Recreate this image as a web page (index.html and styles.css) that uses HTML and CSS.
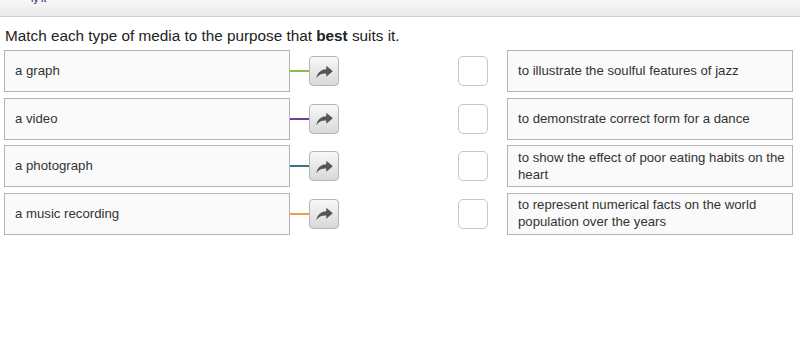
FILE: index.html
```html
<!DOCTYPE html>
<html lang="en">
<head>
    <meta charset="UTF-8">
    <title>Match the media</title>
    <link rel="stylesheet" href="styles.css">
</head>
<body>
    <div class="topbar"><span class="crumb">ly it</span></div>

    <main class="question">
        <p class="prompt">Match each type of media to the purpose that <b>best</b> suits it.</p>

        <div class="rows">
            <div class="row">
                <div class="item">a graph</div>
                <span class="link green"></span>
                <button class="move"><svg viewBox="0 0 16 16"><path d="M9.5 3.2 L15 7.8 L9.5 12.4 V9.8 C5.6 9.6 3.4 10.8 1.2 13.4 C2 9.4 4.4 6.6 9.5 6.2 Z"/></svg></button>
                <span class="check"></span>
                <div class="target">to illustrate the soulful features of jazz</div>
            </div>
            <div class="row">
                <div class="item">a video</div>
                <span class="link purple"></span>
                <button class="move"><svg viewBox="0 0 16 16"><path d="M9.5 3.2 L15 7.8 L9.5 12.4 V9.8 C5.6 9.6 3.4 10.8 1.2 13.4 C2 9.4 4.4 6.6 9.5 6.2 Z"/></svg></button>
                <span class="check"></span>
                <div class="target">to demonstrate correct form for a dance</div>
            </div>
            <div class="row">
                <div class="item">a photograph</div>
                <span class="link teal"></span>
                <button class="move"><svg viewBox="0 0 16 16"><path d="M9.5 3.2 L15 7.8 L9.5 12.4 V9.8 C5.6 9.6 3.4 10.8 1.2 13.4 C2 9.4 4.4 6.6 9.5 6.2 Z"/></svg></button>
                <span class="check"></span>
                <div class="target">to show the effect of poor eating habits on the heart</div>
            </div>
            <div class="row">
                <div class="item">a music recording</div>
                <span class="link orange"></span>
                <button class="move"><svg viewBox="0 0 16 16"><path d="M9.5 3.2 L15 7.8 L9.5 12.4 V9.8 C5.6 9.6 3.4 10.8 1.2 13.4 C2 9.4 4.4 6.6 9.5 6.2 Z"/></svg></button>
                <span class="check"></span>
                <div class="target">to represent numerical facts on the world population over the years</div>
            </div>
        </div>
    </main>
</body>
</html>
```

FILE: styles.css
```css
body {
    margin: 0;
    font-family: 'Liberation Sans', Arial, sans-serif;
    color: #333;
    background: #fff;
}

.topbar {
    height: 16px;
    background: linear-gradient(#f7f7f7, #e9e9e9);
    border-bottom: 1px solid #d2d2d2;
    overflow: hidden;
}

.crumb {
    display: block;
    margin: -6px 0 0 31px;
    font-size: 9px;
    font-weight: bold;
    color: #4a4a8a;
}

.question {
    padding: 0 4px;
}

.prompt {
    margin: 10px 0 5px 1px;
    font-size: 15.3px;
    line-height: 18px;
    color: #222;
}

.rows {
    display: flex;
    flex-direction: column;
    gap: 5.6px;
}

.row {
    display: flex;
    align-items: center;
    height: 42px;
}

.item,
.target {
    box-sizing: border-box;
    width: 286px;
    height: 42px;
    display: flex;
    align-items: center;
    padding: 0 10px 1px;
    font-size: 13.2px;
    line-height: 17px;
    background: #fafafa;
    border: 1px solid #b4b4b4;
}

.target {
    padding-right: 6px;
}

.link {
    width: 19px;
    height: 2px;
}

.green { background: #86bf4f; }
.purple { background: #7a3a98; }
.teal { background: #3a7588; }
.orange { background: #eea043; }

.move {
    box-sizing: border-box;
    width: 30px;
    height: 30px;
    padding: 0;
    border: 1px solid #b4b4b4;
    border-radius: 4px;
    background: linear-gradient(#f8f8f8, #d8d8d8);
    display: flex;
    align-items: center;
    justify-content: center;
}

.move svg {
    width: 19px;
    height: 19px;
    fill: #555;
}

.check {
    box-sizing: border-box;
    width: 30px;
    height: 30px;
    margin: 0 19px 0 119px;
    border: 1px solid #c6c6c6;
    border-radius: 5px;
    background: #fff;
}
```
